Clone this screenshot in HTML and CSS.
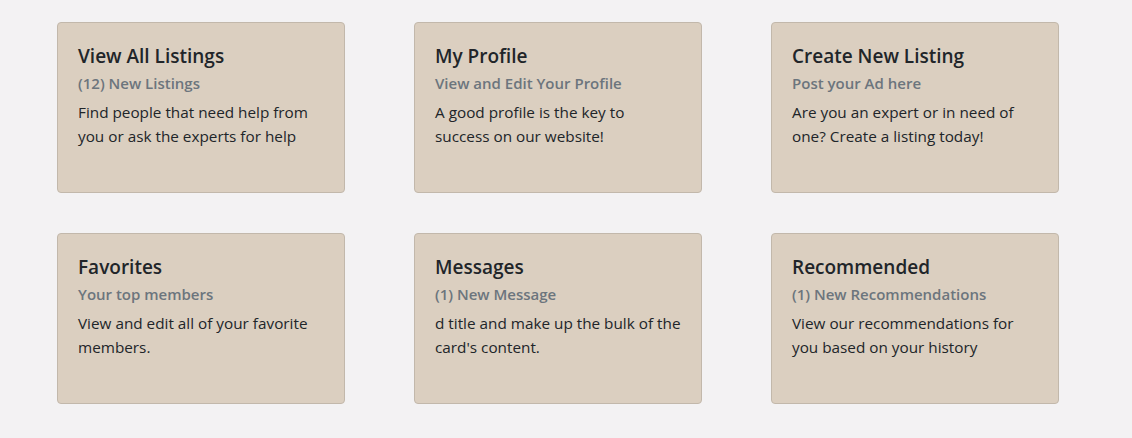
FILE: index.html
```html
<!DOCTYPE html>
<html lang="en">
<head>
<meta charset="utf-8">
<title>Dashboard</title>
<link rel="stylesheet" href="styles.css">
</head>
<body>
<main class="grid">
  <div class="card">
    <h5 class="card-title">View All Listings</h5>
    <h6 class="card-subtitle">(12) New Listings</h6>
    <p class="card-text">Find people that need help from you or ask the experts for help</p>
  </div>
  <div class="card">
    <h5 class="card-title">My Profile</h5>
    <h6 class="card-subtitle">View and Edit Your Profile</h6>
    <p class="card-text">A good profile is the key to success on our website!</p>
  </div>
  <div class="card">
    <h5 class="card-title">Create New Listing</h5>
    <h6 class="card-subtitle">Post your Ad here</h6>
    <p class="card-text">Are you an expert or in need of one? Create a listing today!</p>
  </div>
  <div class="card">
    <h5 class="card-title">Favorites</h5>
    <h6 class="card-subtitle">Your top members</h6>
    <p class="card-text">View and edit all of your favorite members.</p>
  </div>
  <div class="card">
    <h5 class="card-title">Messages</h5>
    <h6 class="card-subtitle">(1) New Message</h6>
    <p class="card-text">d title and make up the bulk of the card's content.</p>
  </div>
  <div class="card">
    <h5 class="card-title">Recommended</h5>
    <h6 class="card-subtitle">(1) New Recommendations</h6>
    <p class="card-text">View our recommendations for you based on your history</p>
  </div>
</main>
</body>
</html>
```

FILE: styles.css
```css
html, body {
  margin: 0;
  padding: 0;
  background: #f3f2f3;
  font-family: "Open Sans", "Noto Sans", "Liberation Sans", sans-serif;
  color: #212529;
}

.grid {
  display: grid;
  grid-template-columns: repeat(3, 288px);
  column-gap: 69px;
  row-gap: 40px;
  padding: 22px 0 0 57px;
}

.card {
  box-sizing: border-box;
  height: 171px;
  background: #dbcfc0;
  border: 1px solid #c2b8ab;
  border-radius: 4px;
  padding: 21px 20px 20px;
}

.card-title {
  margin: 0 0 12px;
  font-size: 19px;
  font-weight: 600;
  line-height: 24px;
  color: #212529;
}

.card-subtitle {
  margin: -6px 0 7px;
  font-size: 15px;
  font-weight: 600;
  line-height: 19px;
  color: #6c757d;
}

.card-text {
  margin: 0;
  font-size: 15.3px;
  line-height: 24px;
  color: #212529;
}
```
